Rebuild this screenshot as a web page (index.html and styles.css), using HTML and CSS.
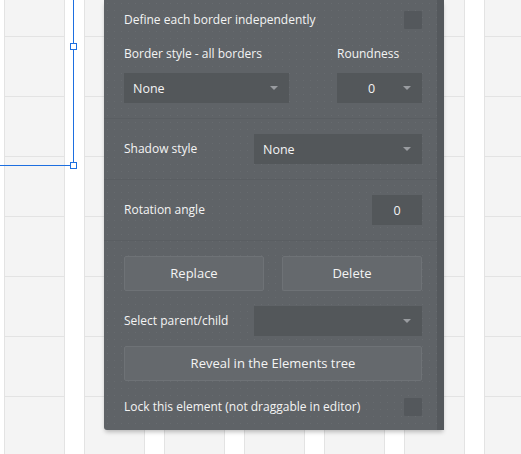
FILE: index.html
```html
<!DOCTYPE html>
<html>
<head>
<meta charset="utf-8">
<link rel="stylesheet" href="styles.css">
</head>
<body>
<div class="canvas">
  <div class="sel-v"></div>
  <div class="sel-h"></div>
  <div class="handle h1"></div>
  <div class="handle h2"></div>

  <div class="panel">
    <div class="panel-body">
      <section class="sec sec-first">
        <div class="row check-row">
          <span class="label">Define each border independently</span>
          <span class="checkbox"></span>
        </div>
        <div class="border-grid">
          <span class="label">Border style - all borders</span>
          <span class="label">Roundness</span>
          <div class="dropdown"><span>None</span><i class="arrow"></i></div>
          <div class="dropdown small"><span class="center">0</span><i class="arrow"></i></div>
        </div>
      </section>
      <section class="sec">
        <div class="row">
          <span class="label">Shadow style</span>
          <div class="dropdown wide"><span>None</span><i class="arrow"></i></div>
        </div>
      </section>
      <section class="sec">
        <div class="row">
          <span class="label">Rotation angle</span>
          <div class="input">0</div>
        </div>
      </section>
      <section class="sec sec-last">
        <div class="btn-row">
          <button class="btn">Replace</button>
          <button class="btn">Delete</button>
        </div>
        <div class="row parent-row">
          <span class="label">Select parent/child</span>
          <div class="dropdown wide"><span></span><i class="arrow"></i></div>
        </div>
        <button class="btn full">Reveal in the Elements tree</button>
        <div class="row lock-row">
          <span class="label">Lock this element (not draggable in editor)</span>
          <span class="checkbox"></span>
        </div>
      </section>
    </div>
    <div class="panel-strip"></div>
  </div>
</div>
</body>
</html>
```
FILE: styles.css
```css
* { box-sizing: border-box; }
html, body { margin: 0; padding: 0; }
body {
  width: 521px;
  height: 454px;
  overflow: hidden;
  font-family: "Open Sans", "Liberation Sans", sans-serif;
}
.canvas {
  position: relative;
  width: 521px;
  height: 454px;
  background-color: #f4f4f4;
  background-image:
    linear-gradient(90deg, #e3e3e3 0 1px, transparent 1px 60px, #e3e3e3 60px 61px, #ffffff 61px 80px),
    linear-gradient(180deg, #e3e3e3 0 1px, transparent 1px 60px);
  background-size: 80px 100%, 100% 60px;
  background-position: 4px 0, 0 36px;
}
.sel-v {
  position: absolute;
  left: 73px; top: 0;
  width: 1px; height: 166px;
  background: #1d6fe0;
}
.sel-h {
  position: absolute;
  left: 0; top: 165px;
  width: 74px; height: 1px;
  background: #1d6fe0;
}
.handle {
  position: absolute;
  width: 7px; height: 7px;
  border: 1px solid #1d6fe0;
  background: #fff;
}
.h1 { left: 70px; top: 43px; }
.h2 { left: 70px; top: 162px; }

.panel {
  position: absolute;
  left: 104px; top: 0;
  width: 340px; height: 430px;
  display: flex;
  background-color: #5f6367;
  background-image: radial-gradient(circle, rgba(255,255,255,0.05) 0.6px, transparent 0.9px);
  background-size: 7px 7px;
  border-bottom-left-radius: 3px;
  box-shadow: 0 3px 4px -1px rgba(0,0,0,0.25);
  color: #f4f4f4;
  font-size: 12px;
}
.panel-body { flex: 1; display: flex; flex-direction: column; }
.panel-strip { width: 7px; background: #55595d; }

.sec {
  padding: 15px 15px 15px 20px;
  border-top: 1px solid #5a5e62;
}
.sec-first { border-top: 0; padding-top: 0; }
.sec-last { padding-bottom: 14px; }

.row {
  display: flex;
  align-items: center;
  justify-content: space-between;
}
.check-row { height: 39px; }
.label { line-height: 18px; white-space: nowrap; }

.checkbox {
  width: 18px; height: 18px;
  background: #54585c;
  border-radius: 1px;
}

.border-grid {
  display: grid;
  grid-template-columns: 165px 85px;
  justify-content: space-between;
  row-gap: 10px;
  margin-top: 5px;
}
.check-row + .border-grid { margin-top: 6px; }
.dropdown {
  position: relative;
  height: 30px;
  background: #53575a;
  display: flex;
  align-items: center;
  padding-left: 9px;
  font-size: 12.5px;
}
.dropdown.wide { width: 168px; }
.dropdown .center { flex: 1; text-align: center; padding-right: 25px; }
.arrow {
  position: absolute;
  right: 11px; top: 13px;
  width: 0; height: 0;
  border-left: 4px solid transparent;
  border-right: 4px solid transparent;
  border-top: 4px solid #999ca0;
}
.input {
  width: 50px; height: 30px;
  background: #53575a;
  display: flex; align-items: center; justify-content: center;
  font-size: 12.5px;
}

.btn-row {
  display: grid;
  grid-template-columns: 140px 140px;
  justify-content: space-between;
}
.btn {
  height: 35px;
  background: #65696d;
  border: 1px solid #6e7276;
  border-radius: 2px;
  color: #f4f4f4;
  font-family: inherit;
  font-size: 13px;
  padding: 0 0 1px;
}
.parent-row { margin-top: 15px; }
.btn.full { width: 100%; margin-top: 10px; }
.lock-row { margin-top: 17px; }
```
